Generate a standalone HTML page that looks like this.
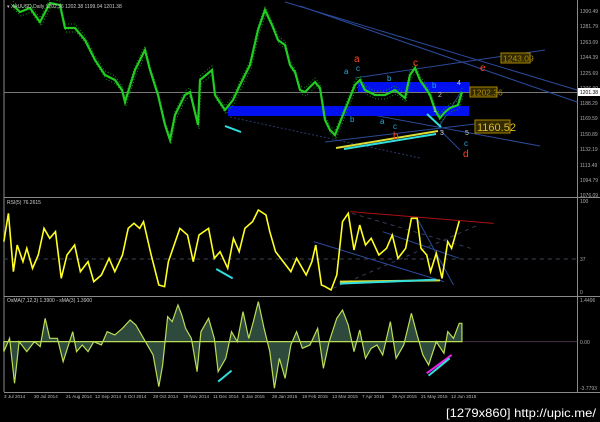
<!DOCTYPE html>
<html><head><meta charset="utf-8"><style>
html,body{margin:0;padding:0;background:#000;width:600px;height:422px;overflow:hidden}
svg{display:block}
text{font-family:"Liberation Sans",sans-serif}
</style></head><body>
<svg width="600" height="422" viewBox="0 0 600 422" xmlns="http://www.w3.org/2000/svg">
<defs>
<polyline id="pr" fill="none" points="13,5 20,12 30,8 40,22 50,3 60,5 65,28 75,28 85,40 95,60 105,75 115,80 122,90 125,102 135,70 145,50 150,70 158,95 165,125 170,140 175,115 185,95 190,92 198,125 200,80 212,70 215,95 225,110 233,100 240,85 250,65 258,30 265,10 272,25 278,40 285,45 290,65 295,72 300,90 305,92 315,82 320,88 325,120 330,130 335,135 345,110 355,85 360,80 365,90 375,95 385,95 395,90 405,98 410,75 415,68 420,80 425,87 430,95 435,110 440,118 445,112 450,108 458,105 462,92"/>
</defs>
<rect width="600" height="422" fill="#000"/>
<g stroke="#8a8a8a" stroke-width="1" fill="none">
<line x1="4" y1="0" x2="4" y2="392"/>
<line x1="577.5" y1="0" x2="577.5" y2="392"/>
<line x1="4" y1="197.5" x2="600" y2="197.5"/>
<line x1="4" y1="296.5" x2="600" y2="296.5"/>
<line x1="4" y1="392.5" x2="600" y2="392.5"/>
</g>
<line x1="4" y1="92.5" x2="577" y2="92.5" stroke="#777" stroke-width="1"/>
<g stroke="#2a4a9a" stroke-width="1" fill="none">
<line x1="285" y1="2" x2="577" y2="90"/>
<line x1="300" y1="6" x2="577" y2="102"/>
<line x1="355" y1="78" x2="545" y2="50"/>
<line x1="357" y1="112" x2="540" y2="146"/>
<line x1="325" y1="142" x2="508" y2="120"/>
<line x1="440" y1="130" x2="460" y2="150"/>
<line x1="440" y1="125" x2="466" y2="84"/>
</g>
<line x1="230" y1="117" x2="420" y2="158" stroke="#2a3a6a" stroke-dasharray="2,2"/>
<rect x="228" y="106" width="241" height="10" fill="#0010ee"/>
<rect x="358" y="82" width="112" height="10" fill="#0010ee"/>
<use href="#pr" stroke="#119911" stroke-width="1" stroke-dasharray="1,2" transform="translate(0,-4)"/>
<use href="#pr" stroke="#119911" stroke-width="1" stroke-dasharray="1,2" transform="translate(1,4)"/>
<use href="#pr" stroke="#22cc22" stroke-width="2.2"/>
<line x1="225" y1="126" x2="241" y2="132" stroke="#33dddd" stroke-width="2"/>
<line x1="336" y1="148" x2="438" y2="131" stroke="#dddd33" stroke-width="2"/>
<line x1="344" y1="149" x2="436" y2="134" stroke="#33dddd" stroke-width="2"/>
<line x1="427" y1="114" x2="441" y2="127" stroke="#33dddd" stroke-width="2"/>
<g font-size="10">
<text x="354" y="62" fill="#ff4422">a</text>
<text x="413" y="66" fill="#ff4422">c</text>
<text x="480" y="71" fill="#ff4422">e</text>
<text x="393" y="139" fill="#ff4422">b</text>
<text x="463" y="157" fill="#ff4422">d</text>
<g fill="#22aadd" font-size="8">
<text x="344" y="74">a</text><text x="356" y="71">c</text><text x="387" y="81">b</text>
<text x="432" y="88">b</text><text x="350" y="122">b</text><text x="380" y="124">a</text>
<text x="393" y="129">c</text><text x="464" y="146">c</text>
</g>
<g fill="#cccccc" font-size="7"><text x="438" y="97">2</text><text x="433" y="112">1</text><text x="457" y="85">4</text><text x="440" y="135">3</text><text x="465" y="135">5</text></g>
</g>
<rect x="501" y="53" width="29" height="10" fill="#332a00" stroke="#aa8800"/>
<text x="503" y="61.5" font-size="8.5" fill="#aa8800">1243.09</text>
<rect x="470" y="87" width="27" height="10" fill="#332a00" stroke="#aa8800"/>
<text x="472" y="95.5" font-size="8.5" fill="#aa8800">1202.36</text>
<rect x="475" y="120" width="35" height="13" fill="#332a00" stroke="#aa8800"/>
<text x="477" y="131" font-size="11" fill="#ddbb22">1160.52</text>
<g font-size="5" fill="#aaa">
<text x="580" y="13">1300.49</text><text x="580" y="28">1281.79</text><text x="580" y="44">1263.09</text>
<text x="580" y="59">1244.39</text><text x="580" y="75">1225.69</text><text x="580" y="90">1206.99</text>
<text x="580" y="105">1188.29</text><text x="580" y="120">1169.59</text><text x="580" y="136">1150.89</text>
<text x="580" y="151">1132.19</text><text x="580" y="167">1113.49</text><text x="580" y="182">1094.79</text>
<text x="580" y="197">1076.09</text>
<text x="580" y="203">100</text><text x="580" y="261">37</text><text x="580" y="294">0</text>
<text x="580" y="302">1.4496</text><text x="580" y="344">0.00</text><text x="580" y="390">-3.7793</text>
</g>
<rect x="578" y="88" width="22" height="8" fill="#fff"/>
<text x="580" y="94" font-size="5" fill="#000">1201.38</text>
<g font-size="5" fill="#ccc">
<text x="7" y="8">▾ XAUUSD,Daily 1202.36 1202.38 1199.04 1201.38</text>
<text x="7" y="204">RSI(5) 76.2615</text>
<text x="7" y="302">OsMA(7,12,3) 1.3900 - sMA(3) 1.3900</text>
</g>
<g transform="translate(0,195) scale(0.3827,0.3333)">
<line x1="10" y1="192" x2="1508" y2="192" stroke="#445" stroke-dasharray="4,4" vector-effect="non-scaling-stroke"/>
<line x1="10" y1="440" x2="1508" y2="440" stroke="#443344" vector-effect="non-scaling-stroke"/>
<line x1="915" y1="50" x2="1290" y2="85" stroke="#aa1111" vector-effect="non-scaling-stroke"/>
<line x1="820" y1="140" x2="1160" y2="260" stroke="#2a4a9a" vector-effect="non-scaling-stroke"/>
<line x1="1000" y1="110" x2="1200" y2="190" stroke="#2a4a9a" vector-effect="non-scaling-stroke"/>
<line x1="1090" y1="70" x2="1185" y2="270" stroke="#2a4a9a" vector-effect="non-scaling-stroke"/>
<line x1="870" y1="280" x2="1250" y2="90" stroke="#333a55" stroke-dasharray="4,4" vector-effect="non-scaling-stroke"/>
<line x1="920" y1="55" x2="1230" y2="160" stroke="#333a55" stroke-dasharray="4,4" vector-effect="non-scaling-stroke"/>
<line x1="888" y1="260" x2="1150" y2="256" stroke="#dddd33" stroke-width="2" vector-effect="non-scaling-stroke"/>
<line x1="888" y1="266" x2="1140" y2="254" stroke="#33dddd" stroke-width="2" vector-effect="non-scaling-stroke"/>
<line x1="565" y1="222" x2="608" y2="250" stroke="#33dddd" stroke-width="2" vector-effect="non-scaling-stroke"/>
<polyline fill="none" stroke="#ffff22" stroke-width="1.6" vector-effect="non-scaling-stroke" points="10,140 22,55 35,230 45,150 60,200 70,160 85,220 100,180 115,100 130,130 145,110 160,250 175,180 195,150 210,230 230,200 245,260 265,240 285,190 300,230 320,180 335,100 350,85 365,100 375,80 395,180 415,270 430,275 440,200 455,150 470,100 490,120 505,200 520,120 545,100 560,190 575,170 595,220 610,130 625,170 640,100 660,80 675,45 695,60 705,110 720,170 740,200 760,230 775,190 800,240 815,200 825,150 840,270 850,275 865,285 880,240 895,80 910,55 925,165 940,90 955,150 970,130 990,180 1010,160 1025,120 1040,190 1060,160 1075,70 1090,70 1100,160 1115,180 1125,230 1140,175 1155,250 1170,140 1180,160 1190,120 1200,78"/>
<polygon fill="#2d4a3c" stroke="#bbdd55" stroke-width="1.2" vector-effect="non-scaling-stroke" points="10,440 10,470 25,430 38,565 50,440 70,470 90,440 105,455 118,370 130,430 150,430 165,500 190,410 200,470 215,450 230,470 245,440 265,450 280,410 300,420 320,400 340,375 355,390 370,420 385,450 400,480 415,575 425,510 438,365 450,380 465,330 475,360 485,400 500,430 515,530 525,410 545,370 560,430 570,530 590,490 605,410 620,440 635,350 650,430 662,380 675,320 690,400 705,470 717,580 730,490 745,550 760,450 775,410 790,460 810,450 830,400 845,520 860,440 880,370 895,345 910,390 925,470 940,405 955,490 970,460 985,450 1000,480 1020,380 1035,490 1055,450 1075,355 1090,420 1105,480 1120,510 1140,440 1160,475 1170,410 1185,430 1200,385 1207,385 1207,440"/>
<line x1="570" y1="560" x2="605" y2="527" stroke="#33dddd" stroke-width="2" vector-effect="non-scaling-stroke"/>
<line x1="1115" y1="535" x2="1180" y2="480" stroke="#ee22ee" stroke-width="2" vector-effect="non-scaling-stroke"/>
<line x1="1120" y1="542" x2="1175" y2="490" stroke="#33dddd" stroke-width="2" vector-effect="non-scaling-stroke"/>
</g>
<g font-size="4.6" fill="#bbb">
<text x="4" y="398">3 Jul 2014</text><text x="34" y="398">30 Jul 2014</text><text x="66" y="398">21 Aug 2014</text>
<text x="95" y="398">12 Sep 2014</text><text x="124" y="398">6 Oct 2014</text><text x="153" y="398">28 Oct 2014</text>
<text x="183" y="398">19 Nov 2014</text><text x="213" y="398">11 Dec 2014</text><text x="242" y="398">6 Jan 2015</text>
<text x="272" y="398">28 Jan 2015</text><text x="302" y="398">19 Feb 2015</text><text x="332" y="398">13 Mar 2015</text>
<text x="362" y="398">7 Apr 2015</text><text x="392" y="398">29 Apr 2015</text><text x="421" y="398">21 May 2015</text>
<text x="451" y="398">12 Jun 2015</text>
</g>
<text x="446" y="417" font-size="12" fill="#fff" textLength="150" lengthAdjust="spacingAndGlyphs">[1279x860] http://upic.me/</text>
</svg>
</body></html>
